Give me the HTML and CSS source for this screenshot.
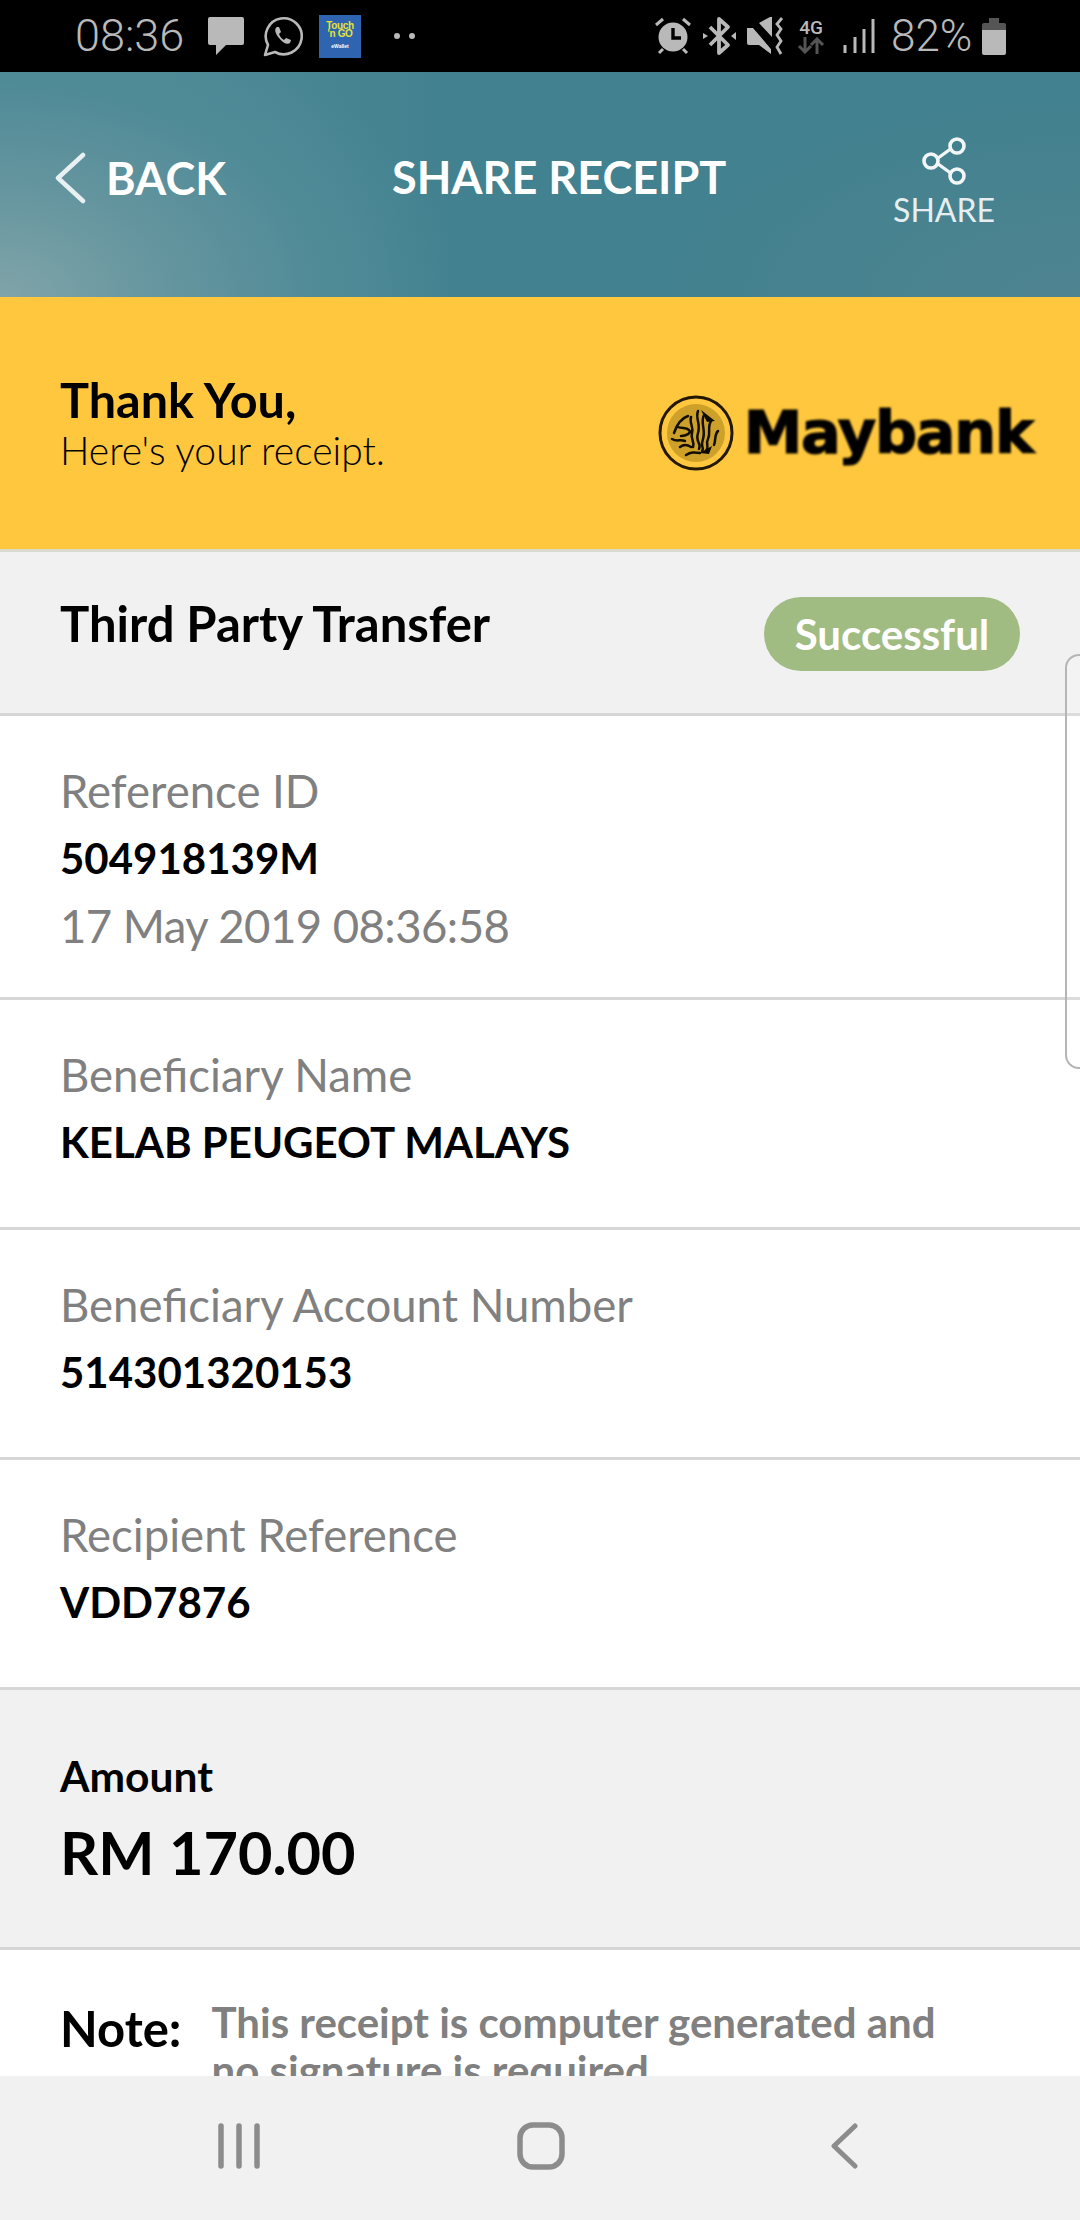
FILE: index.html
```html
<!DOCTYPE html>
<html lang="en">
<head>
<meta charset="utf-8">
<title>Share Receipt</title>
<link rel="stylesheet" href="styles.css">
</head>
<body>
<div class="phone">
  <div class="status">
    <div class="status-left">
      <span class="clock">08:36</span>
      <svg class="ic-chat" width="38" height="40" viewBox="0 0 38 40"><path d="M3 1h32a2 2 0 0 1 2 2v24a2 2 0 0 1-2 2H19l-10 10v-10H3a2 2 0 0 1-2-2V3a2 2 0 0 1 2-2z" fill="#b9b9b9"/></svg>
      <svg class="ic-wa" width="40" height="42" viewBox="0 0 40 42"><path d="M2 40l3-10a18 18 0 1 1 7 7z" fill="none" stroke="#b9b9b9" stroke-width="2.6" stroke-linejoin="round"/><path d="M14 12c-3 2-2 6 2 11s8 7 11 5l1-3-5-2-2 2c-2-1-4-3-5-6l2-2-2-5z" fill="#b9b9b9"/></svg>
      <div class="tng"><span class="tng-a">Touch</span><span class="tng-b">'n GO</span><span class="tng-c">eWallet</span></div>
      <span class="dots"><i></i><i></i></span>
    </div>
    <div class="status-right">
      <svg class="ic-alarm" width="38" height="38" viewBox="0 0 38 38"><circle cx="19" cy="20" r="14.5" fill="#b9b9b9"/><path d="M19 11v10h8" fill="none" stroke="#000" stroke-width="3.4"/><path d="M2 8l7-6M36 8l-7-6M5 36l4-4M33 36l-4-4" stroke="#b9b9b9" stroke-width="3" fill="none"/></svg>
      <svg class="ic-bt" width="33" height="40" viewBox="0 0 33 40"><path d="M16 20V3l9 8-18 18M16 20v17l9-8L7 11" fill="none" stroke="#b9b9b9" stroke-width="3.8" stroke-linejoin="round"/><path d="M0 17l5 3-5 3zM33 16l-5 4 5 4z" fill="#b9b9b9"/></svg>
      <svg class="ic-mute" width="37" height="38" viewBox="0 0 37 38"><path d="M0 11h6l18 21v5L12 28H2a2 2 0 0 1-2-2zM12 6l11-6a1 1 0 0 1 2 1v19z" fill="#b9b9b9"/><path d="M1 1l26 33" stroke="#000" stroke-width="2"/><path d="M35 1l-5 6 4 5-4 6 4 6-4 6 4 7" fill="none" stroke="#b9b9b9" stroke-width="2.8"/></svg>
      <div class="net"><span class="net-g">4G</span><svg width="28" height="17" viewBox="0 0 28 17"><path d="M8 0v13M2 9l6 6 6-6" fill="none" stroke="#555" stroke-width="3"/><path d="M20 17V4M14 8l6-6 6 6" fill="none" stroke="#555" stroke-width="3"/></svg></div>
      <svg class="ic-sig" width="32" height="36" viewBox="0 0 32 36"><path d="M2 27v8M12 19v16M21 11v24M30 1v34" stroke="#b9b9b9" stroke-width="3" fill="none"/></svg>
      <span class="batt-text">82%</span>
      <svg class="ic-batt" width="24" height="37" viewBox="0 0 24 37"><path d="M7 0h10v5H7z" fill="#555"/><path d="M2 5h20a2 2 0 0 1 2 2v6H0V7a2 2 0 0 1 2-2z" fill="#555"/><path d="M0 12h24v23a2 2 0 0 1-2 2H2a2 2 0 0 1-2-2z" fill="#b9b9b9"/></svg>
    </div>
  </div>

  <header class="topbar">
    <div class="back">
      <svg width="32" height="52" viewBox="0 0 32 52"><path d="M29 3L4 26l25 23" fill="none" stroke="#e9f0f1" stroke-width="4.5" stroke-linecap="round" stroke-linejoin="round"/></svg>
      <span>BACK</span>
    </div>
    <div class="title">SHARE RECEIPT</div>
    <div class="share">
      <svg width="46" height="48" viewBox="0 0 46 48"><path d="M13 24L35 8M13 24l22 16" stroke="#f2f6f6" stroke-width="3.4"/><circle cx="36" cy="9" r="7" fill="#41808f" stroke="#f2f6f6" stroke-width="3.6"/><circle cx="10" cy="24" r="7" fill="#41808f" stroke="#f2f6f6" stroke-width="3.6"/><circle cx="36" cy="39" r="7" fill="#41808f" stroke="#f2f6f6" stroke-width="3.6"/></svg>
      <span>SHARE</span>
    </div>
  </header>

  <main class="content">
    <section class="thanks">
      <div>
        <div class="thanks-a">Thank You,</div>
        <div class="thanks-b">Here's your receipt.</div>
      </div>
      <div class="logo">
        <svg class="seal" width="76" height="76" viewBox="0 0 76 76"><circle cx="38" cy="38" r="36" fill="none" stroke="#221803" stroke-width="3"/><circle cx="38" cy="38" r="29" fill="#cda02a"/><path d="M16 38c3-9 8-15 14-17M20 32c4 2 8 0 11 3s-3 6-8 6M14 44c5 3 8 0 13 2M22 52c4-3 8-2 11 0M28 60c5-3 8-3 14-2M33 22c-2 6 3 10 1 16s3 8 1 14M40 16c-3 8 3 12 0 22s4 10 1 16M46 20c-4 8 2 14-1 24s2 8-1 12M53 26c-4 6 0 12-3 18s2 6-2 12M60 36c-4 4-2 10-4 14" fill="none" stroke="#120e02" stroke-width="2.5" stroke-linecap="round"/><path d="M43 15l14 11-8 1zM42 58l12-7-3 8z" fill="#0c0a02"/></svg>
        <span class="logo-text">Maybank</span>
      </div>
    </section>

    <section class="kind">
      <h1>Third Party Transfer</h1>
      <span class="pill">Successful</span>
    </section>

    <section class="row row-first">
      <div class="lbl">Reference ID</div>
      <div class="val">504918139M</div>
      <div class="lbl date">17 May 2019 08:36:58</div>
    </section>
    <section class="row">
      <div class="lbl">Beneficiary Name</div>
      <div class="val">KELAB PEUGEOT MALAYS</div>
    </section>
    <section class="row">
      <div class="lbl">Beneficiary Account Number</div>
      <div class="val">514301320153</div>
    </section>
    <section class="row">
      <div class="lbl">Recipient Reference</div>
      <div class="val">VDD7876</div>
    </section>

    <section class="amount">
      <div class="amount-l">Amount</div>
      <div class="amount-v">RM 170.00</div>
    </section>

    <section class="note">
      <div class="note-h">Note:</div>
      <p>This receipt is computer generated and no signature is required</p>
    </section>
  </main>

  <div class="edge"></div>

  <nav class="navbar">
    <svg width="42" height="46" viewBox="0 0 42 46"><path d="M3 3v40M21 3v40M39 3v40" stroke="#8c8c8c" stroke-width="5.5" stroke-linecap="round" fill="none"/></svg>
    <svg width="48" height="48" viewBox="0 0 48 48"><rect x="3" y="3" width="42" height="42" rx="13" fill="none" stroke="#8c8c8c" stroke-width="5.5"/></svg>
    <svg width="27" height="46" viewBox="0 0 27 46"><path d="M24 3L3 23l21 20" fill="none" stroke="#8c8c8c" stroke-width="5" stroke-linecap="round" stroke-linejoin="round"/></svg>
  </nav>
</div>
</body>
</html>
```
FILE: styles.css
```css
* { box-sizing: border-box; }
html, body { margin: 0; padding: 0; }
body { width: 1080px; height: 2220px; overflow: hidden; font-family: "Lato", "Liberation Sans", sans-serif; background: #fff; }
.phone { position: relative; width: 1080px; height: 2220px; display: flex; flex-direction: column; overflow: hidden; }

.status { flex: 0 0 72px; height: 72px; background: #000; display: flex; justify-content: space-between; align-items: center; padding: 0 74px 0 75px; color: #b9b9b9; font-family: "Roboto", sans-serif; font-weight: 300; }
.status-left, .status-right { display: flex; align-items: center; }
.clock { font-size: 45px; line-height: 72px; width: 108px; white-space: nowrap; }
.ic-chat { margin-left: 24px; }
.ic-wa { margin-left: 18px; }
.tng { margin-left: 16px; width: 42px; height: 43px; background: #2f64b0; display: flex; flex-direction: column; align-items: center; justify-content: center; font-family: "Liberation Sans", sans-serif; font-weight: 700; line-height: 8px; }
.tng-a, .tng-b { font-size: 10px; color: #e3e33a; letter-spacing: -0.4px; }
.tng-c { font-size: 5px; color: #fff; margin-top: 4px; }
.dots { display: flex; gap: 9px; margin-left: 33px; }
.dots i { width: 6px; height: 6px; border-radius: 50%; background: #b9b9b9; display: block; }
.ic-bt { margin-left: 11px; }
.ic-mute { margin-left: 11px; }
.net { display: flex; flex-direction: column; align-items: center; width: 28px; margin-left: 13px; }
.net-g { font-family: "Roboto", sans-serif; font-weight: 500; font-size: 19px; line-height: 19px; }
.ic-sig { margin-left: 18px; }
.batt-text { font-size: 44px; line-height: 72px; margin-left: 16px; width: 81px; white-space: nowrap; }
.ic-batt { margin-left: 10px; }

.topbar { flex: 0 0 225px; height: 225px; position: relative; display: flex; align-items: center; justify-content: space-between; padding: 0 85px 0 54px; color: #fff;
  background: radial-gradient(ellipse 460px 300px at 0 100%, #80a4a9 0%, #66969f 35%, #4f8a97 72%, rgba(66,129,143,0) 100%), radial-gradient(ellipse 420px 200px at 100% 100%, #4f8491 0%, rgba(66,129,143,0) 100%), linear-gradient(90deg, #548d9a 0, #42818f 42%, #42818f 100%); }
.back { display: flex; align-items: center; gap: 20px; font-size: 45px; font-weight: 700; margin-top: -14px; }
.back span { line-height: 52px; }
.title { position: absolute; left: 392px; top: 0; line-height: 210px; font-size: 45px; font-weight: 700; white-space: nowrap; }
.share { display: flex; flex-direction: column; align-items: center; gap: 7px; font-size: 32px; color: #e6eeef; margin-top: -4px; }
.share span { line-height: 36px; }

.content { flex: 1 1 auto; min-height: 0; overflow: hidden; }
.thanks { height: 255px; background: #fec73d; border-bottom: 3px solid #dcd9cd; display: flex; align-items: center; justify-content: space-between; padding: 0 47px 0 60px; color: #000; }
.thanks-a { font-size: 48.5px; font-weight: 700; line-height: 50px; }
.thanks-b { font-size: 39px; font-weight: 300; line-height: 44px; margin-top: 4px; }
.logo { display: flex; align-items: center; gap: 10px; margin-top: 20px; }
.seal { flex: none; }
.logo-text { font-family: "DejaVu Sans", sans-serif; font-weight: 700; font-size: 59px; line-height: 76px; letter-spacing: -1.3px; -webkit-text-stroke: 1.2px #000; filter: blur(0.8px); color: #000; }

.kind { height: 164px; background: #f1f1f1; border-bottom: 3px solid #d6d6d6; display: flex; align-items: center; justify-content: space-between; padding: 0 60px; }
.kind h1 { margin: -19px 0 0; font-size: 49px; font-weight: 700; color: #000; line-height: 60px; }
.pill { width: 256px; height: 74px; line-height: 74px; text-align: center; margin-top: 3px; border-radius: 37px; background: #a1bc83; color: #fff; font-size: 42px; font-weight: 700; }

.row { height: 230px; background: #fff; border-bottom: 3px solid #d6d6d6; padding: 45px 60px 0; }
.row-first { height: 284px; }
.lbl { font-size: 45.5px; line-height: 60px; color: #808080; }
.val { font-size: 42px; line-height: 50px; font-weight: 700; color: #000; margin-top: 12px; }
.date { margin-top: 13px; letter-spacing: -0.55px; }

.amount { height: 260px; background: #f1f1f1; border-bottom: 3px solid #d6d6d6; padding: 61px 60px 0; color: #000; }
.amount-l { font-size: 42.5px; font-weight: 700; line-height: 50px; }
.amount-v { font-size: 59.5px; font-weight: 700; line-height: 76px; margin-top: 13px; }

.note { display: flex; gap: 30px; padding: 48px 60px 0; background: #fff; }
.note-h { font-size: 49px; font-weight: 700; color: #000; line-height: 60px; }
.note p { margin: 0; width: 760px; font-size: 42px; font-weight: 700; line-height: 48px; color: #808080; }

.edge { position: absolute; left: 1065px; top: 654px; width: 30px; height: 415px; border: 2px solid #b5b5b5; border-radius: 14px; background: rgba(255,255,255,0.15); }

.navbar { flex: 0 0 144px; height: 144px; background: #f1f1f1; position: relative; display: grid; grid-template-columns: 299px 314px 1fr; align-items: center; padding-left: 218px; padding-bottom: 5px; }
```
